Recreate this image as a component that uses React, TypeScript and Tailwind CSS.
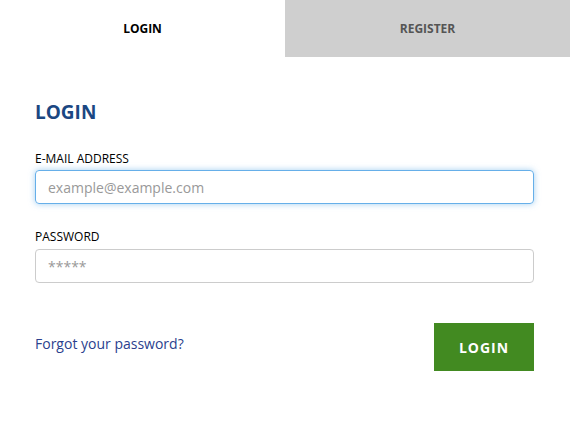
export default function App() {
  return (
    <div className="w-[570px] h-[421px] bg-white" style={{ fontFamily: '"Open Sans", sans-serif' }}>
      {/* Tabs */}
      <div className="flex h-[57px]">
        <div className="flex-1 flex items-center justify-center bg-white text-[12px] font-bold text-black">
          LOGIN
        </div>
        <div className="flex-1 flex items-center justify-center bg-[#cfcfcf] text-[12px] font-bold text-[#555555]">
          REGISTER
        </div>
      </div>

      <div className="pl-[35px] pr-[36px]">
        <h2 className="mt-[42px] text-[19px] leading-[26px] font-bold text-[#1b4782]">LOGIN</h2>

        <label className="block mt-[26px] text-[12px] leading-[16px] text-black">E-MAIL ADDRESS</label>
        <input
          className="block mt-[3px] w-full h-[34px] px-[12px] text-[14px] rounded-[4px] border border-[#66afe9] shadow-[0_0_6px_rgba(102,175,233,0.6)] outline-none placeholder:text-[#999999]"
          placeholder="example@example.com"
        />

        <label className="block mt-[25px] text-[12px] leading-[16px] text-black">PASSWORD</label>
        <input
          className="block mt-[4px] w-full h-[34px] px-[12px] text-[14px] rounded-[4px] border border-[#cccccc] outline-none placeholder:text-[#999999]"
          placeholder="*****"
        />

        <div className="flex items-center justify-between mt-[40px]">
          <a className="text-[14px] text-[#2b3f8e] mt-[-8px]">Forgot your password?</a>
          <button className="w-[100px] h-[48px] bg-[#428a21] text-white text-[14px] font-bold tracking-[1px]">
            LOGIN
          </button>
        </div>
      </div>
    </div>
  )
}
